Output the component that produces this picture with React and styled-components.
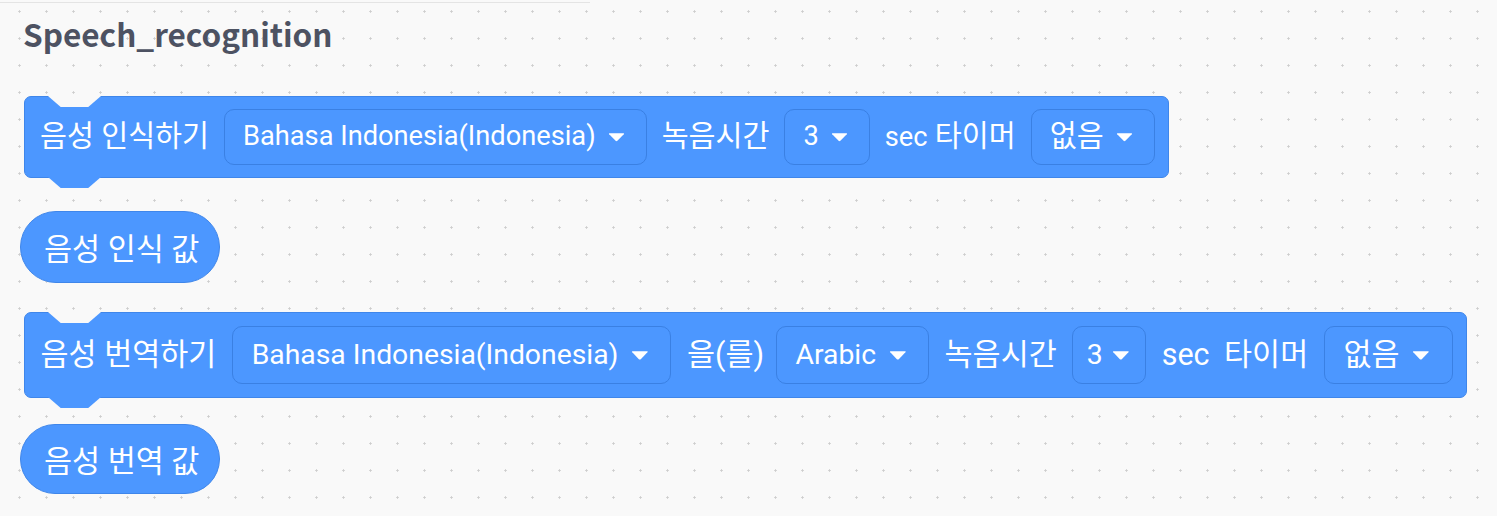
import React from 'react'
import styled, { createGlobalStyle } from 'styled-components'

const BLUE = '#4c97ff'
const EDGE = '#3f86ea'

const GlobalStyle = createGlobalStyle`
  html, body { margin: 0; padding: 0; }
  body {
    width: 1497px;
    height: 516px;
    overflow: hidden;
    background-color: #f9f9f9;
    background-image: radial-gradient(circle, #cdcdcd 0.9px, transparent 1.4px);
    background-size: 27px 27px;
    background-position: 6px -2px;
    font-family: Roboto, "Noto Sans CJK KR", sans-serif;
  }
`

const Palette = styled.div`
    display: flex;
    flex-direction: column;
    align-items: flex-start;
    padding-left: 20px;
    border-top: 1px solid #e4e4e4;
    margin-top: 2px;
    width: 570px;
`

const Title = styled.h3`
    margin: 12px 0 0 3px;
    font-family: "Noto Sans CJK KR", "Noto Sans", sans-serif;
    font-size: 31.5px;
    line-height: 36px;
    font-weight: 700;
    color: #4d5262;
    white-space: nowrap;
`

const Block = styled.div`
    position: relative;
    display: flex;
    align-items: center;
    gap: ${p => 15 * p.$s}px;
    box-sizing: border-box;
    height: ${p => p.$h}px;
    margin-top: ${p => p.$mt}px;
    margin-left: 4px;
    padding: 0 ${p => 13 * p.$s}px 0 ${p => 15 * p.$s}px;
    background: ${BLUE};
    border: 1px solid ${EDGE};
    border-radius: 7px;
    color: #fff;
    font-size: ${p => 29.3 * p.$s}px;
    white-space: nowrap;

    &::before, &::after {
        content: '';
        position: absolute;
        left: 23px;
        width: 53px;
        height: 11px;
        clip-path: polygon(0 0, 100% 0, 76% 100%, 24% 100%);
    }
    &::before {
        top: -1px;
        background: #f9f9f9;
    }
    &::after {
        top: 100%;
        background: ${BLUE};
    }
`

const Label = styled.span`
    line-height: 1;
    margin-right: ${p => p.$tight ? -4 : 0}px;
`

const Latin = styled.span`
    font-size: ${p => p.$size || 0.93}em;
    margin-right: ${p => p.$space || 0}px;
`

const Dropdown = styled.div`
    display: flex;
    align-items: center;
    gap: ${p => 12 * p.$s * p.$pad}px;
    box-sizing: border-box;
    height: ${p => 56 * p.$s}px;
    padding: 0 ${p => 21 * p.$s * p.$pad}px 0 ${p => 18 * p.$s * p.$pad}px;
    border: 1.5px solid #3a80e3;
    border-radius: 10px;
    background: ${BLUE};
    line-height: 1;
`

const Reporter = styled.div`
    display: flex;
    align-items: center;
    box-sizing: border-box;
    height: ${p => p.$h}px;
    margin-top: ${p => p.$mt}px;
    padding: 0 20px 0 23px;
    background: ${BLUE};
    border: 1px solid ${EDGE};
    border-radius: 40px;
    color: #fff;
    font-size: 30.5px;
    white-space: nowrap;
`

const Arrow = ({ s = 1 }) => (
    <svg width={17 * s} height={10 * s} viewBox="0 0 17 10">
        <path d="M1.5 1.2 H15.5 Q16.6 1.2 15.8 2.2 L9.4 8.8 Q8.5 9.7 7.6 8.8 L1.2 2.2 Q0.4 1.2 1.5 1.2 Z" fill="#fff" />
    </svg>
)

const Select = ({ children, s, latin, pad = 1 }) => (
    <Dropdown $s={s} $pad={pad}>
        {latin ? <Latin>{children}</Latin> : <span>{children}</span>}
        <Arrow s={s} />
    </Dropdown>
)

const App = () => {
    return (
        <>
            <GlobalStyle />
            <Palette>
                <Title>Speech_recognition</Title>

                <Block $s={1} $h={82} $mt={45}>
                    <Label>음성 인식하기</Label>
                    <Select s={1} latin>Bahasa Indonesia(Indonesia)</Select>
                    <Label>녹음시간</Label>
                    <Select s={1} latin>3</Select>
                    <Label><Latin>sec</Latin> 타이머</Label>
                    <Select s={1}>없음</Select>
                </Block>

                <Reporter $h={72} $mt={33}>음성 인식 값</Reporter>

                <Block $s={1.04} $h={86} $mt={29}>
                    <Label>음성 번역하기</Label>
                    <Select s={1.04} latin>Bahasa Indonesia(Indonesia)</Select>
                    <Label $tight>을(를)</Label>
                    <Select s={1.04} latin>Arabic</Select>
                    <Label>녹음시간</Label>
                    <Select s={1.04} latin pad={0.72}>3</Select>
                    <Label><Latin $size={1} $space={7}>sec</Latin> 타이머</Label>
                    <Select s={1.04}>없음</Select>
                </Block>

                <Reporter $h={70} $mt={26}>음성 번역 값</Reporter>
            </Palette>
        </>
    )
}

export default App
